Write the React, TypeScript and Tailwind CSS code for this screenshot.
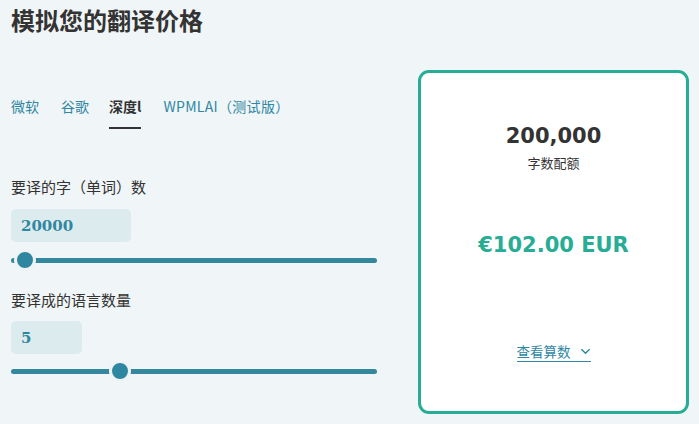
import React from "react";

const cjk = { fontFamily: '"Noto Sans CJK SC", "Noto Sans", sans-serif' };
const dv = { fontFamily: '"DejaVu Sans", "Noto Sans CJK SC", sans-serif' };

function Slider({ pos }: { pos: number }) {
  return (
    <div className="relative mt-[10px] h-[16px] w-[366px]">
      <div className="absolute left-0 right-0 top-[5.5px] h-[5px] rounded-full bg-[#34889e]" />
      <div
        className="absolute top-[-3px] h-[22px] w-[22px] rounded-full border-[3px] border-[#eef4f6] bg-[#2f86a0]"
        style={{ left: pos - 11 }}
      />
    </div>
  );
}

export default function App() {
  return (
    <div className="min-h-[424px] w-[699px] bg-[#f0f5f7] pl-[11px] text-[#333]" style={cjk}>
      <h1 className="pt-[2px] text-[24px] font-bold leading-[36px] text-[#333]">模拟您的翻译价格</h1>
      <div className="mt-[32px] flex">
        <div className="w-[366px]">
          <div className="mt-[26px] flex text-[14px] leading-[20px]">
            <div className="pb-[13px] text-[#2f87a1]">微软</div>
            <div className="ml-[22px] pb-[13px] text-[#2f87a1]">谷歌</div>
            <div className="ml-[20px] border-b-2 border-[#333] pb-[11px] font-bold text-[#333]">深度l</div>
            <div className="ml-[22px] pb-[13px] tracking-[0.3px] text-[#2f87a1]">WPMLAI（测试版）</div>
          </div>
          <div className="mt-[48px] text-[15px] leading-[20px] text-[#333]">要译的字（单词）数</div>
          <div
            className="mt-[12px] flex h-[33px] w-[120px] items-center rounded-[5px] bg-[#dcebee] pl-[10px] pt-[2px] text-[15px] font-bold text-[#2f87a1]"
            style={{ fontFamily: '"DejaVu Serif", serif' }}
          >
            20000
          </div>
          <Slider pos={14} />
          <div className="mt-[22px] text-[15px] leading-[20px] text-[#333]">要译成的语言数量</div>
          <div
            className="mt-[11px] flex h-[33px] w-[71px] items-center rounded-[5px] bg-[#dcebee] pl-[10px] pt-[2px] text-[15px] font-bold text-[#2f87a1]"
            style={{ fontFamily: '"DejaVu Serif", serif' }}
          >
            5
          </div>
          <div className="mt-[-1px]">
            <Slider pos={109} />
          </div>
        </div>
        <div className="ml-[41px] flex h-[344px] w-[271px] flex-col items-center rounded-[11px] border-[3px] border-[#27ad95] bg-white">
          <div className="mt-[48px] text-[21px] font-bold leading-[30px] text-[#333]" style={dv}>
            200,000
          </div>
          <div className="mt-[3px] text-[13px] leading-[18px] text-[#333]">字数配额</div>
          <div className="mt-[58px] text-[21px] font-bold leading-[30px] text-[#27ad95]" style={dv}>
            €102.00 EUR
          </div>
          <div className="mt-[82px] flex items-center border-b-[1.5px] border-[#2f87a1] text-[13.5px] leading-[19px] text-[#2f87a1]">
            <span>查看算数</span>
            <svg className="ml-[9px]" width="11" height="11" viewBox="0 0 12 12" fill="none">
              <path d="M1.5 3.5 L6 8 L10.5 3.5" stroke="#2f87a1" strokeWidth="1.5" />
            </svg>
          </div>
        </div>
      </div>
    </div>
  );
}
